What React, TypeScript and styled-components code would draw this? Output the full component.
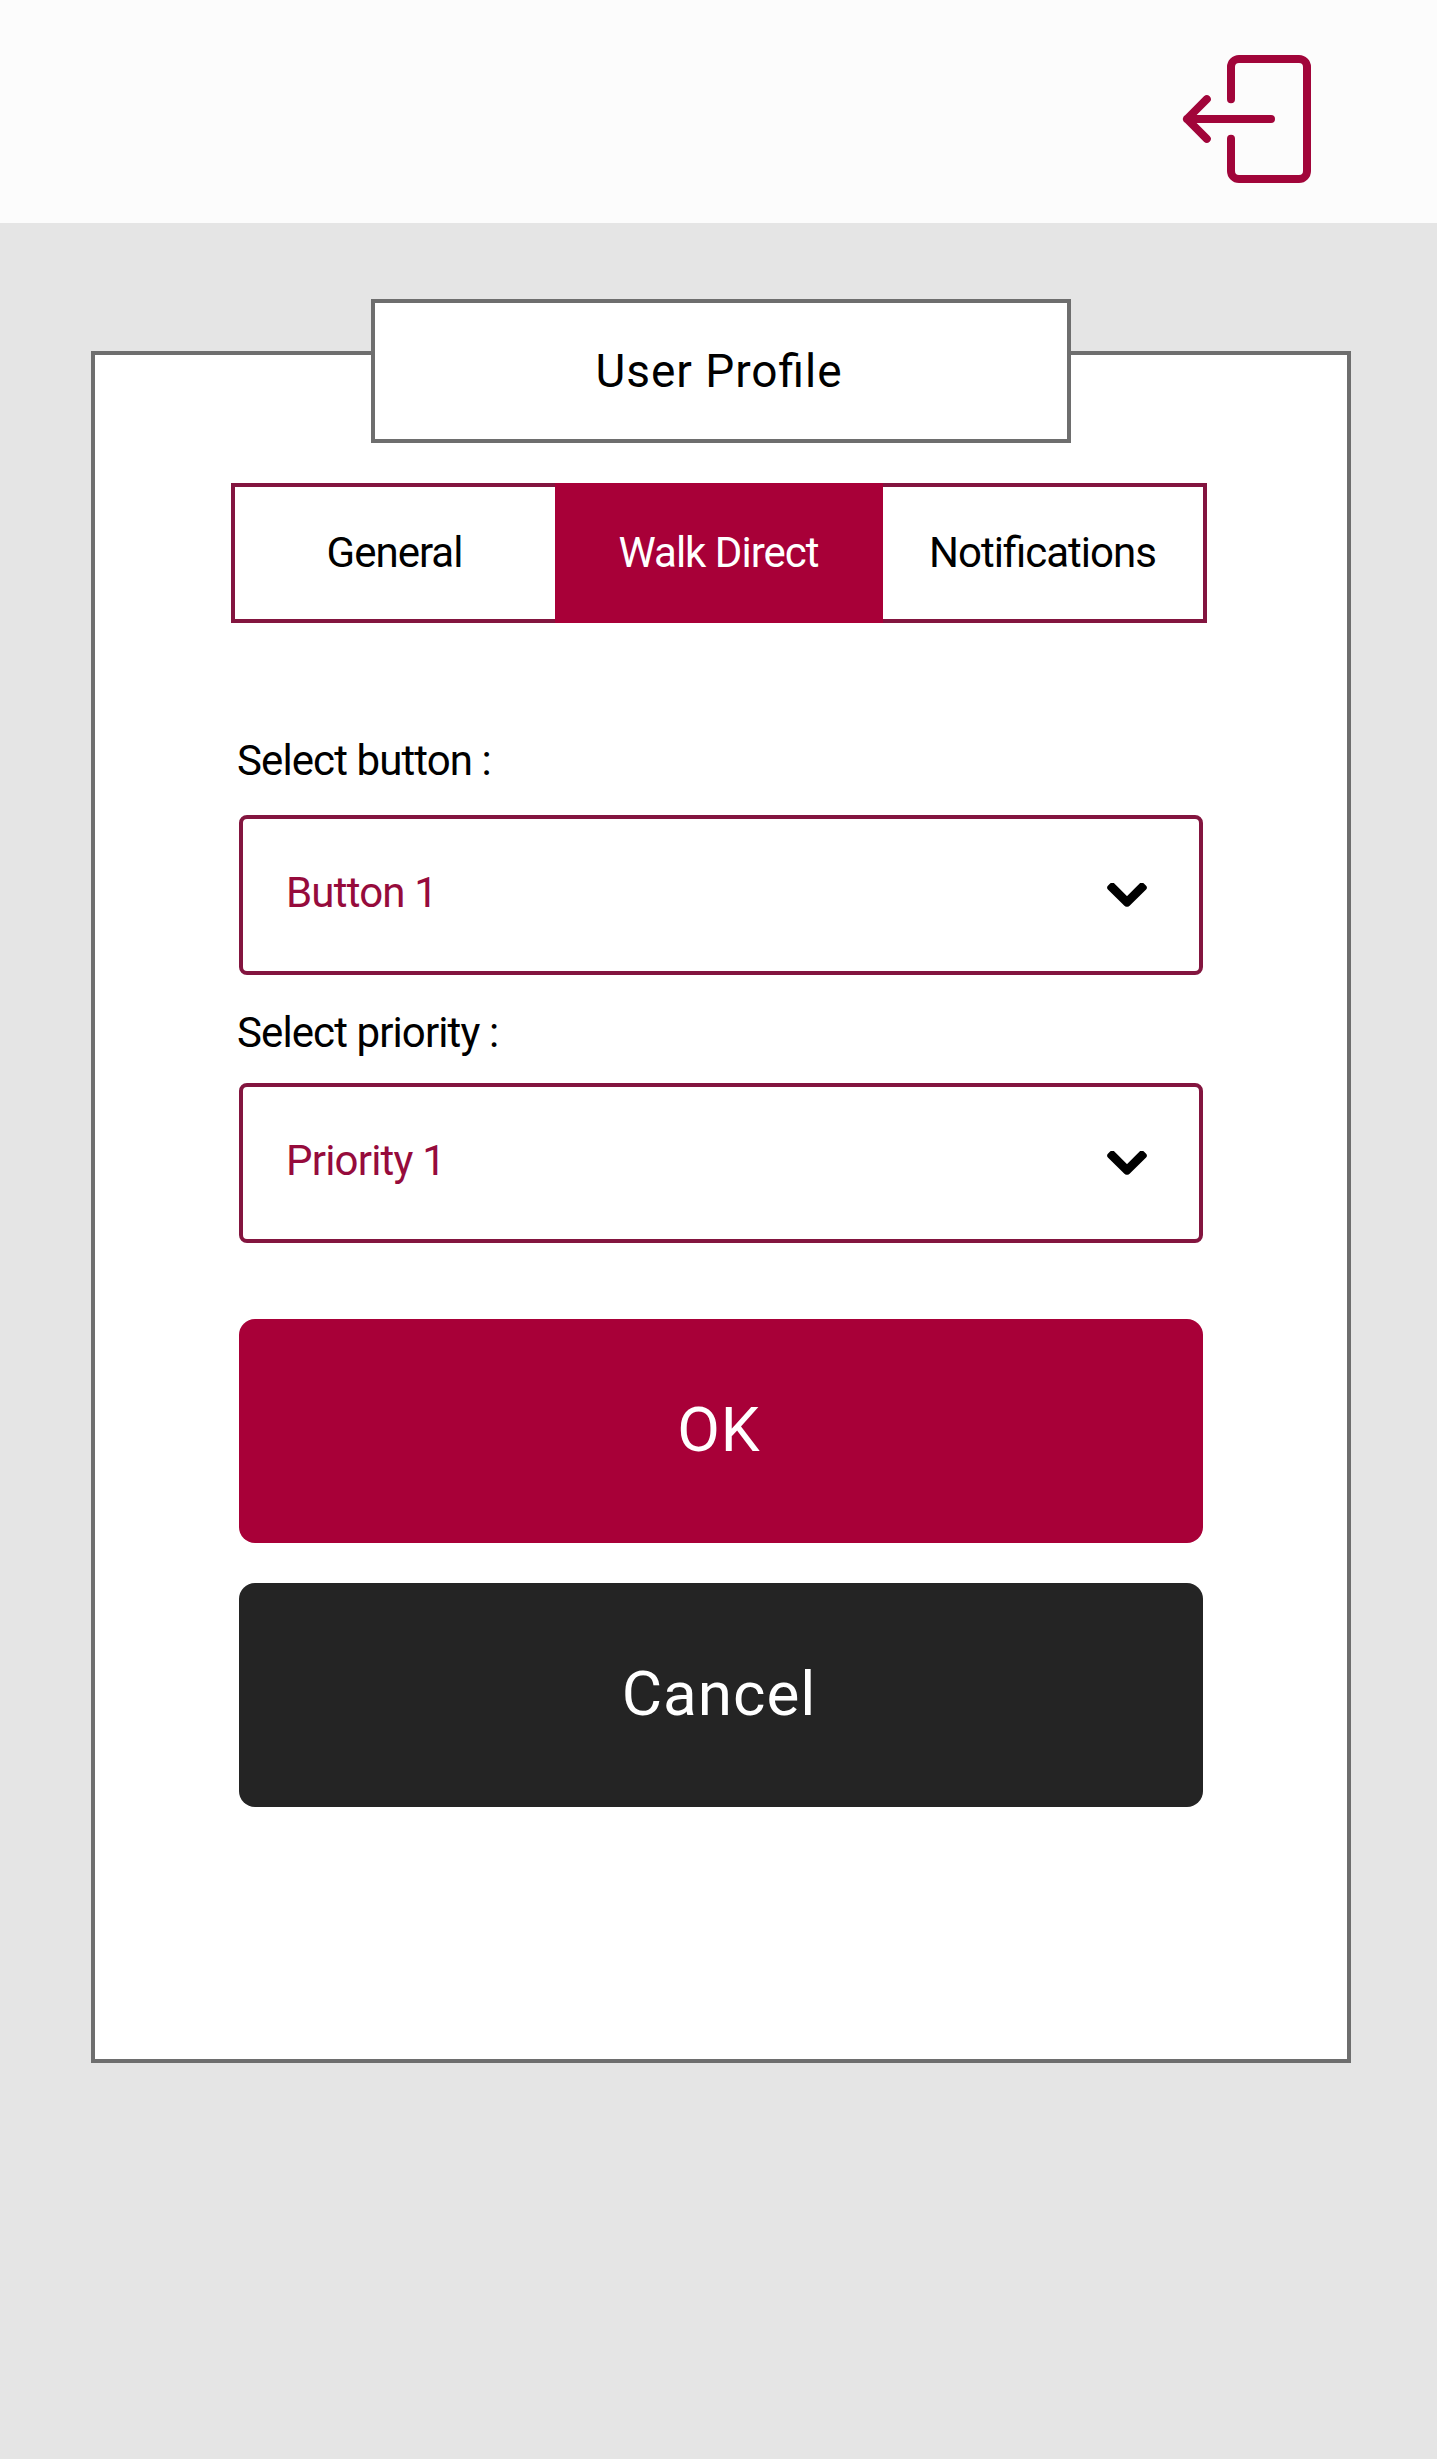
import React, { useState } from "react";
import styled, { createGlobalStyle } from "styled-components";

const crimson = "#a80038";
const outline = "#83153f";
const grey = "#6e6e6e";

const GlobalStyle = createGlobalStyle`
  *, *::before, *::after {
    box-sizing: border-box;
  }
  body {
    margin: 0;
    background: #e5e5e5;
    color: #000;
    font-family: Roboto, "Noto Sans", sans-serif;
    font-feature-settings: "liga" 1;
  }
  button {
    margin: 0;
    padding: 0;
    border: 0;
    background: none;
    color: inherit;
    font: inherit;
    font-feature-settings: inherit;
    cursor: pointer;
  }
`;

const Screen = styled.div`
  display: flex;
  flex-direction: column;
  width: 1437px;
  min-height: 2459px;
  background: #e5e5e5;
`;

const Header = styled.header`
  display: flex;
  justify-content: flex-end;
  align-items: flex-start;
  height: 223px;
  padding: 55px 126px 0 0;
  background: #fcfcfc;
`;

const ExitButton = styled.button`
  display: flex;
`;

const Panel = styled.main`
  display: flex;
  flex-direction: column;
  align-items: flex-start;
  width: 1260px;
  height: 1712px;
  margin: 128px 0 0 91px;
  padding: 0 136px;
  background: #fff;
  border: 4px solid ${grey};
`;

const Title = styled.h1`
  display: flex;
  align-items: center;
  justify-content: center;
  align-self: center;
  width: 700px;
  height: 144px;
  margin: -56px 0 40px;
  padding-right: 4px;
  background: #fff;
  border: 4px solid ${grey};
  font-size: 46px;
  font-weight: 400;
  letter-spacing: 0.97px;
`;

const Tabs = styled.nav`
  display: grid;
  grid-template-columns: 320px 328px 320px;
  width: 976px;
  height: 140px;
  border: 4px solid ${outline};
`;

const Tab = styled.button<{ $active: boolean }>`
  display: flex;
  align-items: center;
  justify-content: center;
  margin: ${({ $active }) => ($active ? "-4px 0" : "0")};
  padding: 0 1px 2px 0;
  background: ${({ $active }) => ($active ? crimson : "#fff")};
  color: ${({ $active }) => ($active ? "#fff" : "#000")};
  font-size: 42px;
  letter-spacing: -0.98px;
`;

const Form = styled.form`
  display: flex;
  flex-direction: column;
  width: 964px;
  margin: 113px 0 0 8px;
`;

const Label = styled.div`
  height: 49px;
  margin-left: -2px;
  font-size: 42px;
  line-height: 49px;
  letter-spacing: -0.9px;
`;

const Select = styled.button<{ $gapAbove: number; $gapBelow: number }>`
  display: flex;
  align-items: center;
  justify-content: space-between;
  height: 160px;
  margin: ${({ $gapAbove, $gapBelow }) => `${$gapAbove}px 0 ${$gapBelow}px`};
  padding: 0 52px 0 43px;
  border: 4px solid ${outline};
  border-radius: 8px;
`;

const SelectValue = styled.span`
  padding-bottom: 5px;
  color: #960b3c;
  font-size: 42px;
  line-height: 49px;
  letter-spacing: -0.8px;
`;

const Actions = styled.div`
  display: flex;
  flex-direction: column;
  gap: 40px;
`;

const Action = styled.button<{ $tone: string }>`
  display: flex;
  align-items: center;
  justify-content: center;
  height: 224px;
  padding: 0 4px 3px 0;
  border-radius: 16px;
  background: ${({ $tone }) => $tone};
  color: #fff;
  font-size: 62px;
  letter-spacing: 1px;
`;

const ExitIcon = () => (
  <svg
    width="129"
    height="128"
    viewBox="0 0 129 128"
    fill="none"
    stroke="#a1053a"
    strokeWidth="8"
    strokeLinecap="round"
    strokeLinejoin="round"
  >
    <path d="M49 44.3V12a8 8 0 0 1 8-8h60a8 8 0 0 1 8 8v104a8 8 0 0 1-8 8H57a8 8 0 0 1-8-8V83.7" />
    <path d="M89 64H5M24.8 44.2L5 64l19.8 19.8" />
  </svg>
);

const ChevronIcon = () => (
  <svg width="40" height="24" viewBox="0 0 40 24">
    <path
      d="M3.24 4.7L5.25 2.69L20 17.44L34.75 2.69L36.76 4.7L20.5 20.7H19.5Z"
      fill="#000"
      stroke="#000"
      strokeWidth="6"
      strokeLinejoin="round"
    />
  </svg>
);

const tabs = ["General", "Walk Direct", "Notifications"];

export default function App() {
  const [active, setActive] = useState("Walk Direct");

  return (
    <Screen>
      <GlobalStyle />
      <Header>
        <ExitButton type="button">
          <ExitIcon />
        </ExitButton>
      </Header>
      <Panel>
        <Title>User Profile</Title>
        <Tabs>
          {tabs.map((name) => (
            <Tab
              key={name}
              type="button"
              $active={name === active}
              onClick={() => setActive(name)}
            >
              {name}
            </Tab>
          ))}
        </Tabs>
        <Form onSubmit={(event) => event.preventDefault()}>
          <Label>Select button :</Label>
          <Select type="button" $gapAbove={30} $gapBelow={33}>
            <SelectValue>Button 1</SelectValue>
            <ChevronIcon />
          </Select>
          <Label>Select priority :</Label>
          <Select type="button" $gapAbove={26} $gapBelow={76}>
            <SelectValue>Priority 1</SelectValue>
            <ChevronIcon />
          </Select>
          <Actions>
            <Action type="submit" $tone={crimson}>
              OK
            </Action>
            <Action type="button" $tone="#242424">
              Cancel
            </Action>
          </Actions>
        </Form>
      </Panel>
    </Screen>
  );
}
